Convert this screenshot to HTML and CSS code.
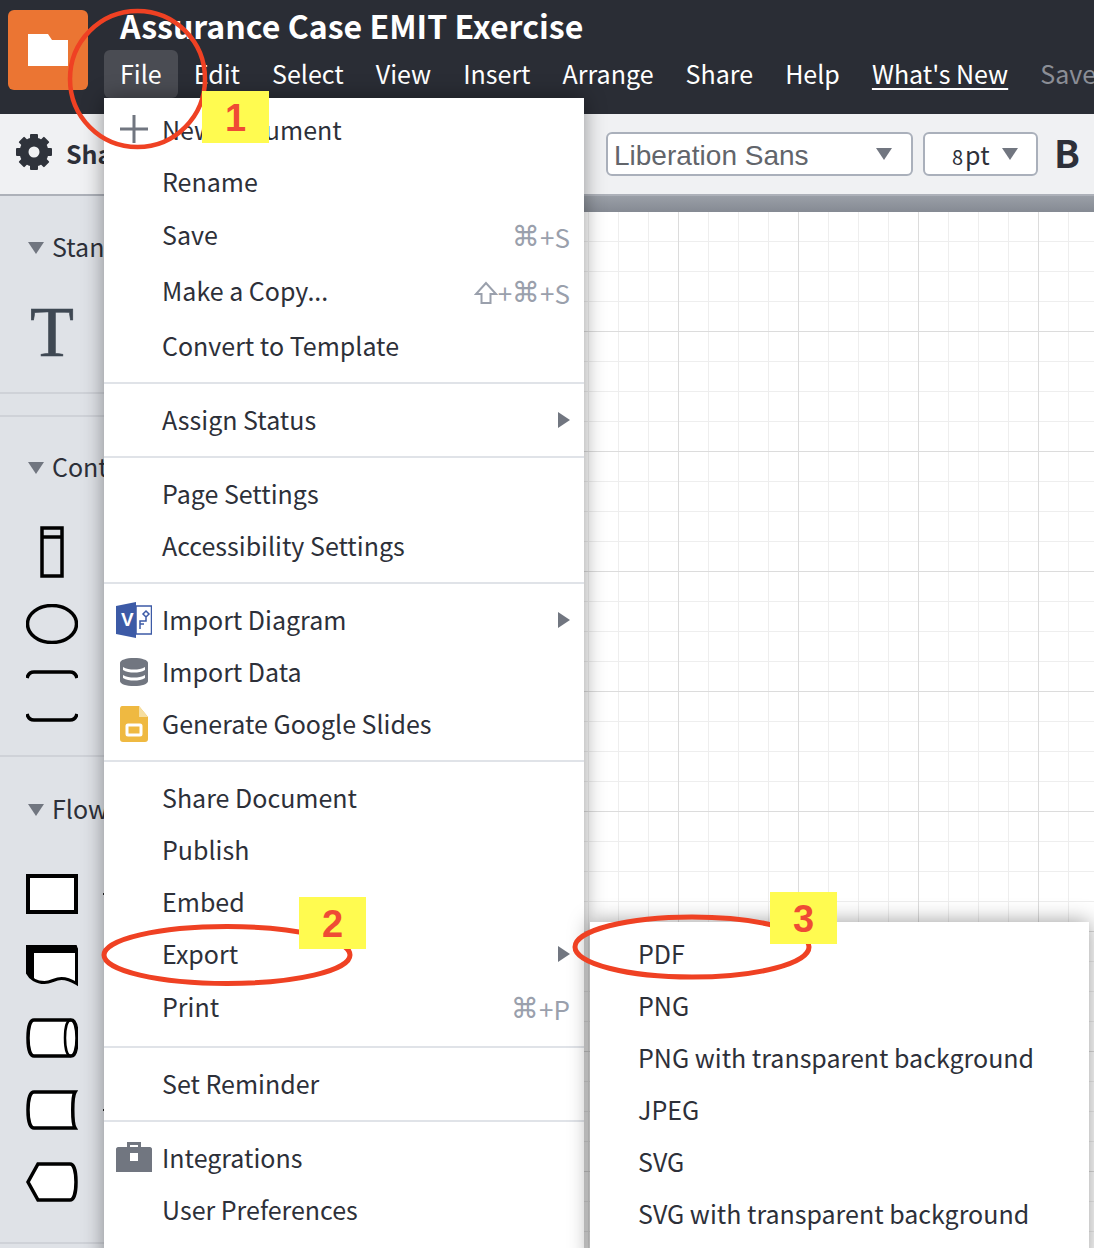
FILE: index.html
```html
<!DOCTYPE html>
<html lang="en">
<head>
    <meta charset="UTF-8">
    <meta name="viewport" content="width=device-width, initial-scale=1.0">
    <title>Assurance Case EMIT Exercise</title>
    <link rel="stylesheet" href="styles.css">
</head>
<body>

<div class="page">
    <header class="topbar">
        <div class="logo">
            <svg width="40" height="32" viewBox="0 0 40 32"><path d="M0 0h20l4 6h16v26H0z" fill="#fff"/></svg>
        </div>
        <div class="topbar-main">
            <div class="doc-title">Assurance Case EMIT Exercise</div>
            <nav class="nav">
                <span class="nav-item active">File</span>
                <span class="nav-item">Edit</span>
                <span class="nav-item">Select</span>
                <span class="nav-item">View</span>
                <span class="nav-item">Insert</span>
                <span class="nav-item">Arrange</span>
                <span class="nav-item">Share</span>
                <span class="nav-item">Help</span>
                <span class="nav-item link">What's New</span>
                <span class="nav-item muted">Save</span>
            </nav>
        </div>
    </header>

    <div class="toolbar">
        <svg class="gear" width="36" height="36" viewBox="0 0 36 36">
            <circle cx="18" cy="18" r="10" fill="none" stroke="#2f333b" stroke-width="9"/>
            <rect x="14" y="0" width="8" height="8" rx="1" fill="#2f333b"/>
            <rect x="14" y="0" width="8" height="8" rx="1" fill="#2f333b" transform="rotate(45 18 18)"/>
            <rect x="14" y="0" width="8" height="8" rx="1" fill="#2f333b" transform="rotate(90 18 18)"/>
            <rect x="14" y="0" width="8" height="8" rx="1" fill="#2f333b" transform="rotate(135 18 18)"/>
            <rect x="14" y="0" width="8" height="8" rx="1" fill="#2f333b" transform="rotate(180 18 18)"/>
            <rect x="14" y="0" width="8" height="8" rx="1" fill="#2f333b" transform="rotate(225 18 18)"/>
            <rect x="14" y="0" width="8" height="8" rx="1" fill="#2f333b" transform="rotate(270 18 18)"/>
            <rect x="14" y="0" width="8" height="8" rx="1" fill="#2f333b" transform="rotate(315 18 18)"/>
        </svg>
        <span class="toolbar-label">Shapes</span>
        <div class="select font-select">
            <span>Liberation Sans</span>
            <i class="tri-down"></i>
        </div>
        <div class="select size-select">
            <span class="size-num">8</span><span class="size-unit">pt</span>
            <i class="tri-down"></i>
        </div>
        <span class="bold-btn">B</span>
    </div>

    <div class="workspace">
        <aside class="sidebar">
            <section class="panel panel-std">
                <div class="panel-head"><i class="tri-down small"></i><span>Standard</span></div>
                <div class="text-tool">T</div>
            </section>
            <section class="panel panel-cont">
                <div class="panel-head"><i class="tri-down small"></i><span>Containers</span></div>
                <div class="shapes shapes-cont">
                    <div class="shape-row">
                        <svg class="inset" width="24" height="52" viewBox="0 0 24 52">
                            <rect x="2" y="2" width="20" height="48" fill="none" stroke="#000" stroke-width="3.500"/>
                            <path d="M2 11h20" stroke="#000" stroke-width="3.500"/>
                        </svg>
                    </div>
                    <div class="shape-row">
                        <svg width="52" height="40" viewBox="0 0 52 40">
                            <ellipse cx="26" cy="20" rx="24.500" ry="18.500" fill="none" stroke="#000" stroke-width="3.500"/>
                        </svg>
                    </div>
                    <div class="shape-row">
                        <svg width="52" height="52" viewBox="0 0 52 52">
                            <path d="M1 8C2 4 4 2 8 2h36c4 0 6 2 7 6M1 44c1 4 3 6 7 6h36c4 0 6-2 7-6" fill="none" stroke="#000" stroke-width="3.500"/>
                        </svg>
                    </div>
                </div>
            </section>
            <section class="panel panel-flow">
                <div class="panel-head"><i class="tri-down small"></i><span>Flowchart</span></div>
                <div class="shapes shapes-flow">
                    <div class="shape-row">
                        <svg width="52" height="40" viewBox="0 0 52 40">
                            <rect x="2" y="2" width="48" height="36" fill="#fff" stroke="#000" stroke-width="4"/>
                        </svg>
                        <i class="peek"></i>
                    </div>
                    <div class="shape-row">
                        <svg width="52" height="42" viewBox="0 0 52 42">
                            <path d="M1.500 1.500h48l1 3v34c-5-3-10-5-15-5-7 0-10 4-17 4C10 37.500 4 33 1.500 28z" fill="#fff" stroke="#000" stroke-width="3"/>
                            <path d="M0 0h49l3 4v4H8v26l-8-6z" fill="#000"/>
                        </svg>
                    </div>
                    <div class="shape-row">
                        <svg width="52" height="40" viewBox="0 0 52 40">
                            <path d="M8 2h37c4 0 6 8 6 18s-2 18-6 18H8c-4 0-6-8-6-18S4 2 8 2z" fill="#fff" stroke="#000" stroke-width="3.500"/>
                            <path d="M45 2c-4 0-6 8-6 18s2 18 6 18" fill="none" stroke="#000" stroke-width="2.500"/>
                        </svg>
                    </div>
                    <div class="shape-row">
                        <svg width="52" height="40" viewBox="0 0 52 40">
                            <path d="M8 2h41c-3 5-3 31 0 36H8c-4 0-6-8-6-18S4 2 8 2z" fill="#fff" stroke="#000" stroke-width="3.500"/>
                        </svg>
                        <i class="peek"></i>
                    </div>
                    <div class="shape-row">
                        <svg width="52" height="40" viewBox="0 0 52 40">
                            <path d="M12 2h32c4 0 6 8 6 18s-2 18-6 18H12L2 20z" fill="#fff" stroke="#000" stroke-width="3.500"/>
                        </svg>
                    </div>
                </div>
            </section>
        </aside>
        <main class="canvas">
            <div class="canvas-bar"></div>
            <div class="canvas-grid"></div>
        </main>
    </div>

    <!-- File menu -->
    <div class="menu file-menu">
        <div class="row">
            <svg class="row-icon" width="36" height="36" viewBox="0 0 36 36"><path d="M18 3v28M4 17h28" stroke="#717680" stroke-width="3"/></svg>
            <span class="label">New Document</span>
        </div>
        <div class="row"><span class="label">Rename</span></div>
        <div class="row tall"><span class="label">Save</span><span class="keys"><b>⌘</b>+S</span></div>
        <div class="row tall">
            <span class="label">Make a Copy...</span>
            <span class="keys">
                <svg class="shift" width="24" height="24" viewBox="0 0 24 24"><path d="M12 2L2 13h5.500v9h9v-9H22z" fill="none" stroke="#9aa0ac" stroke-width="2"/></svg>+<b>⌘</b>+S
            </span>
        </div>
        <div class="row"><span class="label">Convert to Template</span></div>
        <div class="sep"></div>
        <div class="row"><span class="label">Assign Status</span><i class="tri-right"></i></div>
        <div class="sep"></div>
        <div class="row"><span class="label">Page Settings</span></div>
        <div class="row"><span class="label">Accessibility Settings</span></div>
        <div class="sep"></div>
        <div class="row">
            <svg class="row-icon" width="36" height="36" viewBox="0 0 36 36">
                <rect x="20" y="4" width="15.500" height="28" fill="#fff" stroke="#3c5aa6" stroke-width="1.500"/>
                <path d="M0 4l20-4v36L0 32z" fill="#3c5aa6"/>
                <text x="5" y="24" class="visio-v">V</text>
                <path d="M30 9l3 3-3 3-3-3zM30 15v4h-6v8M24 22h4" fill="none" stroke="#3c5aa6" stroke-width="1.500"/>
            </svg>
            <span class="label">Import Diagram</span><i class="tri-right"></i>
        </div>
        <div class="row">
            <svg class="row-icon" width="36" height="36" viewBox="0 0 36 36">
                <path d="M4 9c0-3 6-5 14-5s14 2 14 5v18c0 3-6 5-14 5S4 30 4 27z" fill="#717680"/>
                <path d="M7 13c3 2 7 2.500 11 2.500S26 15 29 13v3c-3 2-7 2.500-11 2.500S10 18 7 16zM7 21c3 2 7 2.500 11 2.500S26 23 29 21v3c-3 2-7 2.500-11 2.500S10 26 7 24z" fill="#fff"/>
            </svg>
            <span class="label">Import Data</span>
        </div>
        <div class="row">
            <svg class="row-icon" width="36" height="36" viewBox="0 0 36 36">
                <path d="M6 0h17l9 11v22c0 2-1 3-3 3H7c-2 0-3-1-3-3V3c0-2 1-3 2-3z" fill="#efb941"/>
                <path d="M23 0l9 11h-9z" fill="#f6dea0"/>
                <rect x="11" y="19" width="14" height="10" rx="1" fill="#efb941" stroke="#fff" stroke-width="3"/>
            </svg>
            <span class="label">Generate Google Slides</span>
        </div>
        <div class="sep"></div>
        <div class="row"><span class="label">Share Document</span></div>
        <div class="row"><span class="label">Publish</span></div>
        <div class="row"><span class="label">Embed</span></div>
        <div class="row"><span class="label">Export</span><i class="tri-right"></i></div>
        <div class="row tall"><span class="label">Print</span><span class="keys"><b>⌘</b>+P</span></div>
        <div class="sep"></div>
        <div class="row"><span class="label">Set Reminder</span></div>
        <div class="sep"></div>
        <div class="row">
            <svg class="row-icon" width="36" height="36" viewBox="0 0 36 36">
                <path d="M11 8V2h14v6h-3V5H14v3z" fill="#717680"/>
                <path d="M0 9c0-1 1-2 2-2h32c1 0 2 1 2 2v23H0z" fill="#717680"/>
                <rect x="14" y="13" width="8" height="8" fill="#fff"/>
            </svg>
            <span class="label">Integrations</span>
        </div>
        <div class="row"><span class="label">User Preferences</span></div>
    </div>

    <!-- Export submenu -->
    <div class="menu export-menu">
        <div class="row"><span>PDF</span></div>
        <div class="row"><span>PNG</span></div>
        <div class="row"><span>PNG with transparent background</span></div>
        <div class="row"><span>JPEG</span></div>
        <div class="row"><span>SVG</span></div>
        <div class="row"><span>SVG with transparent background</span></div>
    </div>

    <!-- Hand drawn callouts -->
    <svg class="marks" width="1094" height="1248" viewBox="0 0 1094 1248">
        <g fill="none" stroke="#ef4123">
            <ellipse cx="137.500" cy="79" rx="67.500" ry="68" stroke-width="4.500"/>
            <ellipse cx="227" cy="955" rx="123" ry="28.500" stroke-width="5"/>
            <ellipse cx="692" cy="947" rx="117" ry="30" stroke-width="5"/>
        </g>
    </svg>
    <div class="tag tag-1">1</div>
    <div class="tag tag-2">2</div>
    <div class="tag tag-3">3</div>
</div>

</body>
</html>
```

FILE: styles.css
```css
* {
    box-sizing: border-box;
}
body {
    margin: 0;
    font-family: "Noto Sans CJK SC", "Noto Sans", sans-serif;
    font-size: 25px;
    color: #2d3039;
    background-color: #fff;
}
.page {
    position: relative;
    width: 1094px;
    height: 1248px;
    overflow: hidden;
}

/* top bar */
.topbar {
    display: flex;
    height: 114px;
    padding: 10px 0 0 8px;
    background-color: #2a2d35;
    color: #fff;
}
.logo {
    display: flex;
    align-items: center;
    justify-content: center;
    flex: none;
    width: 80px;
    height: 80px;
    background-color: #eb7533;
    border-radius: 6px;
}
.topbar-main {
    margin-left: 16px;
}
.doc-title {
    height: 40px;
    margin-top: -4px;
    margin-bottom: 4px;
    padding-left: 16px;
    font-size: 32.1px;
    font-weight: 700;
    line-height: 38px;
    white-space: nowrap;
}
.nav {
    display: flex;
    font-size: 25.05px;
    white-space: nowrap;
}
.nav-item {
    height: 48px;
    padding: 0 16px;
    line-height: 47px;
    border-radius: 6px;
}
.nav-item.active {
    background-color: #4a4c53;
}
.nav-item.link {
    text-decoration: underline;
    text-underline-offset: 4px;
    text-decoration-thickness: 2px;
}
.nav-item.muted {
    color: #8b8e96;
}

/* toolbar */
.toolbar {
    display: flex;
    align-items: center;
    height: 82px;
    padding-left: 16px;
    background-color: #f0f1f3;
    border-bottom: 2px solid #adb1b9;
}
.gear {
    flex: none;
    margin-bottom: 5px;
}
.toolbar-label {
    width: 540px;
    margin-left: 14px;
    margin-bottom: 2px;
    font-weight: 600;
}
.select {
    position: relative;
    height: 44px;
    background-color: #fff;
    border: 2px solid #aab0bb;
    border-radius: 6px;
    line-height: 42px;
}
.font-select {
    width: 307px;
    padding: 1px 0 0 6px;
    font-family: "Liberation Sans", sans-serif;
    font-size: 28px;
    color: #62656b;
}
.size-select {
    width: 115px;
    margin-left: 10px;
    padding-left: 27px;
    line-height: 40px;
}
.size-num {
    margin-right: 2px;
    font-size: 20px;
}
.select .tri-down {
    position: absolute;
    top: 14px;
    right: 19px;
}
.size-select .tri-down {
    right: 18px;
}
.bold-btn {
    margin-left: 16px;
    margin-bottom: 4px;
    font-size: 38px;
    font-weight: 700;
    line-height: 44px;
}
.tri-down {
    display: block;
    width: 0;
    height: 0;
    border-left: 8px solid transparent;
    border-right: 8px solid transparent;
    border-top: 12px solid #717680;
}
.tri-right {
    display: block;
    width: 0;
    height: 0;
    border-top: 8px solid transparent;
    border-bottom: 8px solid transparent;
    border-left: 12px solid #717680;
}

/* workspace */
.workspace {
    display: flex;
    height: 1052px;
}
.sidebar {
    flex: none;
    width: 200px;
    background-color: #dfe2e7;
}
.panel {
    border-bottom: 2px solid #cfd2d8;
    padding-top: 36px;
}
.panel-std {
    height: 198px;
    margin-bottom: 21px;
}
.panel-cont {
    border-top: 2px solid #cfd2d8;
    height: 342px;
    padding-top: 35px;
}
.panel-flow {
    height: 487px;
    padding-top: 37px;
}
.panel-head {
    display: flex;
    align-items: center;
    height: 32px;
    padding-left: 28px;
    white-space: nowrap;
}
.panel-head span {
    margin-left: 8px;
    margin-bottom: 4px;
}
.text-tool {
    padding-left: 30px;
    margin-top: 28px;
    font-family: "Liberation Serif", serif;
    font-size: 72px;
    line-height: 80px;
    color: #3f4853;
    -webkit-text-stroke: 0.6px #3f4853;
}
.shapes {
    display: flex;
    flex-direction: column;
}
.shapes-cont {
    gap: 26px;
    margin-top: 42px;
}
.shapes-flow {
    gap: 32px;
    margin-top: 48px;
}
.shape-row {
    display: flex;
    align-items: center;
    height: 40px;
    padding-left: 26px;
}
.shapes-cont .shape-row:first-child,
.shapes-cont .shape-row:last-child {
    height: 52px;
}
.inset {
    margin-left: 14px;
}
.peek {
    display: block;
    width: 6px;
    height: 2px;
    margin-left: 25px;
    background-color: #222;
}
.canvas {
    flex: 1;
    display: flex;
    flex-direction: column;
    min-width: 0;
}
.canvas-bar {
    flex: none;
    height: 16px;
    background: linear-gradient(#9a9fa7, #858a93);
}
.canvas-grid {
    flex: 1;
    background-color: #fff;
    background-image:
        linear-gradient(to right, #dcdcdc 1px, transparent 1px),
        linear-gradient(to bottom, #dcdcdc 1px, transparent 1px),
        linear-gradient(to right, #eeeeee 1px, transparent 1px),
        linear-gradient(to bottom, #eeeeee 1px, transparent 1px);
    background-size: 120px 120px, 120px 120px, 30px 30px, 30px 30px;
    background-position: 118px 0, 0 119px, 28px 0, 0 29px;
}

/* menus */
.menu {
    position: absolute;
    background-color: #fff;
    padding-top: 6px;
    box-shadow: 0 0 20px rgba(0, 0, 0, 0.4);
}
.file-menu {
    top: 98px;
    left: 104px;
    width: 480px;
    height: 1170px;
}
.export-menu {
    top: 922px;
    left: 590px;
    width: 499px;
    height: 340px;
}
.row {
    display: grid;
    grid-template-columns: 46px 1fr auto;
    align-items: center;
    height: 52px;
    padding: 0 14px 0 12px;
    line-height: 50px;
    white-space: nowrap;
}
.row.tall {
    height: 56px;
    padding-bottom: 6px;
}
.label,
.export-menu span {
    grid-column: 2;
    margin-bottom: 2px;
}
.row-icon {
    grid-column: 1;
}
.export-menu .row {
    display: flex;
    padding-left: 48px;
}
.keys {
    display: inline-flex;
    align-items: center;
    grid-column: 3;
    margin-top: 4px;
    font-size: 26px;
    color: #9aa0ac;
}
.keys b {
    font-family: "DejaVu Sans", sans-serif;
    font-size: 28px;
    font-weight: 400;
}
.tri-right {
    grid-column: 3;
}
.visio-v {
    font-family: "Liberation Sans", sans-serif;
    font-size: 19px;
    font-weight: 700;
    fill: #fff;
}
.sep {
    height: 2px;
    margin: 10px 0;
    background-color: #e0e3e8;
}

/* callouts */
.marks {
    position: absolute;
    top: 0;
    left: 0;
}
.tag {
    position: absolute;
    width: 67px;
    height: 52px;
    background-color: #fffb50;
    color: #ef4b35;
    font-family: "Liberation Sans", sans-serif;
    font-size: 38px;
    font-weight: 700;
    line-height: 54px;
    text-align: center;
}
.tag-1 {
    top: 91px;
    left: 202px;
}
.tag-2 {
    top: 897px;
    left: 299px;
}
.tag-3 {
    top: 892px;
    left: 770px;
}
```
